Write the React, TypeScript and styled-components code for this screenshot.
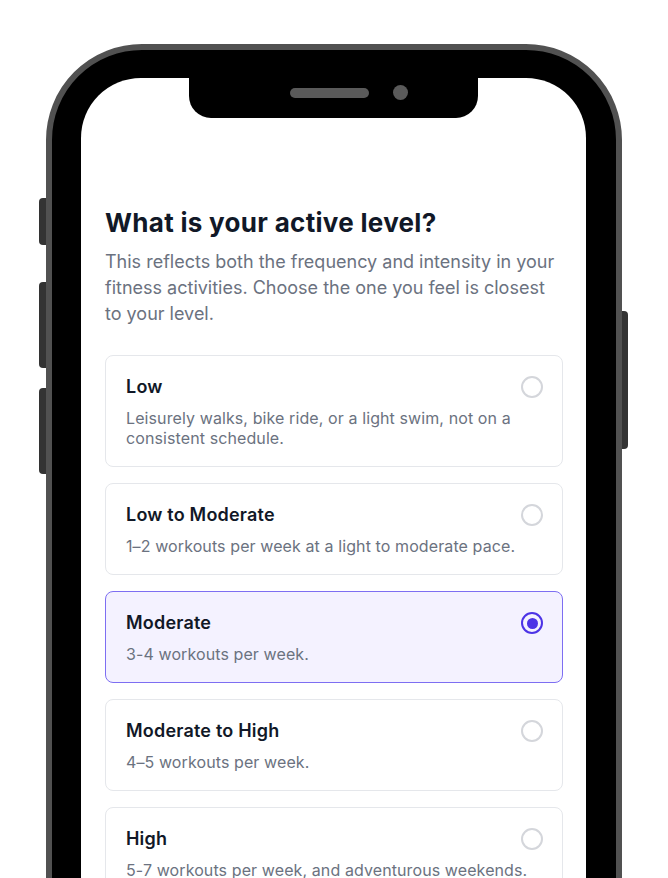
import React, { useState } from 'react'
import styled, { createGlobalStyle } from 'styled-components'

const GlobalStyle = createGlobalStyle`
  html, body {
    margin: 0;
    padding: 0;
    background: #ffffff;
    overflow: hidden;
  }
  body {
    font-family: Inter, "Noto Sans", "Liberation Sans", sans-serif;
    -webkit-font-smoothing: antialiased;
  }
`

const Page = styled.div`
  display: flex;
  justify-content: center;
  padding-top: 44px;
  height: 834px;
  overflow: hidden;
`

const PhoneWrap = styled.div`
  position: relative;
  width: 576px;
`

const SideButton = styled.div<{ side: 'left' | 'right'; top: number; length: number }>`
  position: absolute;
  top: ${p => p.top}px;
  height: ${p => p.length}px;
  width: ${p => (p.side === 'left' ? 7 : 6)}px;
  ${p => (p.side === 'left' ? 'left: -7px;' : 'right: -6px;')}
  background: #333333;
  border-radius: ${p => (p.side === 'left' ? '4px 0 0 4px' : '0 4px 4px 0')};
`

const Frame = styled.div`
  box-sizing: border-box;
  width: 576px;
  height: 940px;
  background: #000000;
  border: 6px solid #515151;
  border-radius: 96px;
  padding: 28px 30px 0 29px;
`

const Screen = styled.div`
  position: relative;
  height: 100%;
  background: #ffffff;
  border-radius: 60px 60px 0 0;
  padding: 129px 23px 0 24px;
  box-sizing: border-box;
`

const Notch = styled.div`
  position: absolute;
  top: 0;
  left: 108px;
  width: 289px;
  height: 40px;
  background: #000000;
  border-radius: 0 0 22px 22px;
  display: flex;
  align-items: flex-start;
  padding: 7px 0 0 101px;
  box-sizing: border-box;
  gap: 24px;
`

const Speaker = styled.div`
  width: 79px;
  height: 10px;
  margin-top: 3px;
  border-radius: 5px;
  background: #5a5a5a;
`

const Camera = styled.div`
  width: 15px;
  height: 15px;
  border-radius: 50%;
  background: #5a5a5a;
`

const Title = styled.h1`
  margin: 0;
  font-size: 26px;
  line-height: 32px;
  font-weight: 700;
  color: #111827;
  letter-spacing: 0.3px;
`

const Lead = styled.p`
  margin: 10px 0 0;
  font-size: 18px;
  line-height: 26px;
  color: #6b7280;
`

const Options = styled.div`
  display: flex;
  flex-direction: column;
  gap: 16px;
  margin-top: 28px;
`

const Card = styled.label<{ selected: boolean }>`
  display: flex;
  flex-direction: column;
  gap: 9px;
  padding: 19px 20px 18px;
  border-radius: 8px;
  border: 1px solid ${p => (p.selected ? '#7d6ef2' : '#e5e7eb')};
  background: ${p => (p.selected ? '#f4f2ff' : '#ffffff')};
  cursor: pointer;
`

const CardHead = styled.div`
  display: flex;
  align-items: center;
  justify-content: space-between;
  height: 24px;
`

const CardTitle = styled.span`
  font-size: 18px;
  line-height: 24px;
  font-weight: 600;
  color: #111827;
  letter-spacing: 0.2px;
`

const Radio = styled.span<{ checked: boolean }>`
  box-sizing: border-box;
  width: 22px;
  height: 22px;
  margin-right: -1px;
  border-radius: 50%;
  border: 2px solid ${p => (p.checked ? '#4c33e6' : '#d4d6db')};
  display: flex;
  align-items: center;
  justify-content: center;

  &::after {
    content: '';
    width: 11px;
    height: 11px;
    border-radius: 50%;
    background: ${p => (p.checked ? '#4c33e6' : 'transparent')};
  }
`

const CardText = styled.span`
  font-size: 16px;
  line-height: 20px;
  color: #6b7280;
  letter-spacing: 0.1px;
`

const levels = [
  { id: 'low', title: 'Low', text: 'Leisurely walks, bike ride, or a light swim, not on a consistent schedule.' },
  { id: 'low-mod', title: 'Low to Moderate', text: '1–2 workouts per week at a light to moderate pace.' },
  { id: 'mod', title: 'Moderate', text: '3-4 workouts per week.' },
  { id: 'mod-high', title: 'Moderate to High', text: '4–5 workouts per week.' },
  { id: 'high', title: 'High', text: '5-7 workouts per week, and adventurous weekends.' },
]

export default function App() {
  const [selected, setSelected] = useState('mod')

  return (
    <>
      <GlobalStyle />
      <Page>
        <PhoneWrap>
          <SideButton side="left" top={154} length={47} />
          <SideButton side="left" top={238} length={86} />
          <SideButton side="left" top={344} length={86} />
          <SideButton side="right" top={267} length={138} />
          <Frame>
            <Screen>
              <Notch>
                <Speaker />
                <Camera />
              </Notch>
              <Title>What is your active level?</Title>
              <Lead>
                This reflects both the frequency and intensity in your fitness activities. Choose the one you
                feel is closest to your level.
              </Lead>
              <Options>
                {levels.map(level => (
                  <Card key={level.id} selected={selected === level.id} onClick={() => setSelected(level.id)}>
                    <CardHead>
                      <CardTitle>{level.title}</CardTitle>
                      <Radio checked={selected === level.id} />
                    </CardHead>
                    <CardText>{level.text}</CardText>
                  </Card>
                ))}
              </Options>
            </Screen>
          </Frame>
        </PhoneWrap>
      </Page>
    </>
  )
}
